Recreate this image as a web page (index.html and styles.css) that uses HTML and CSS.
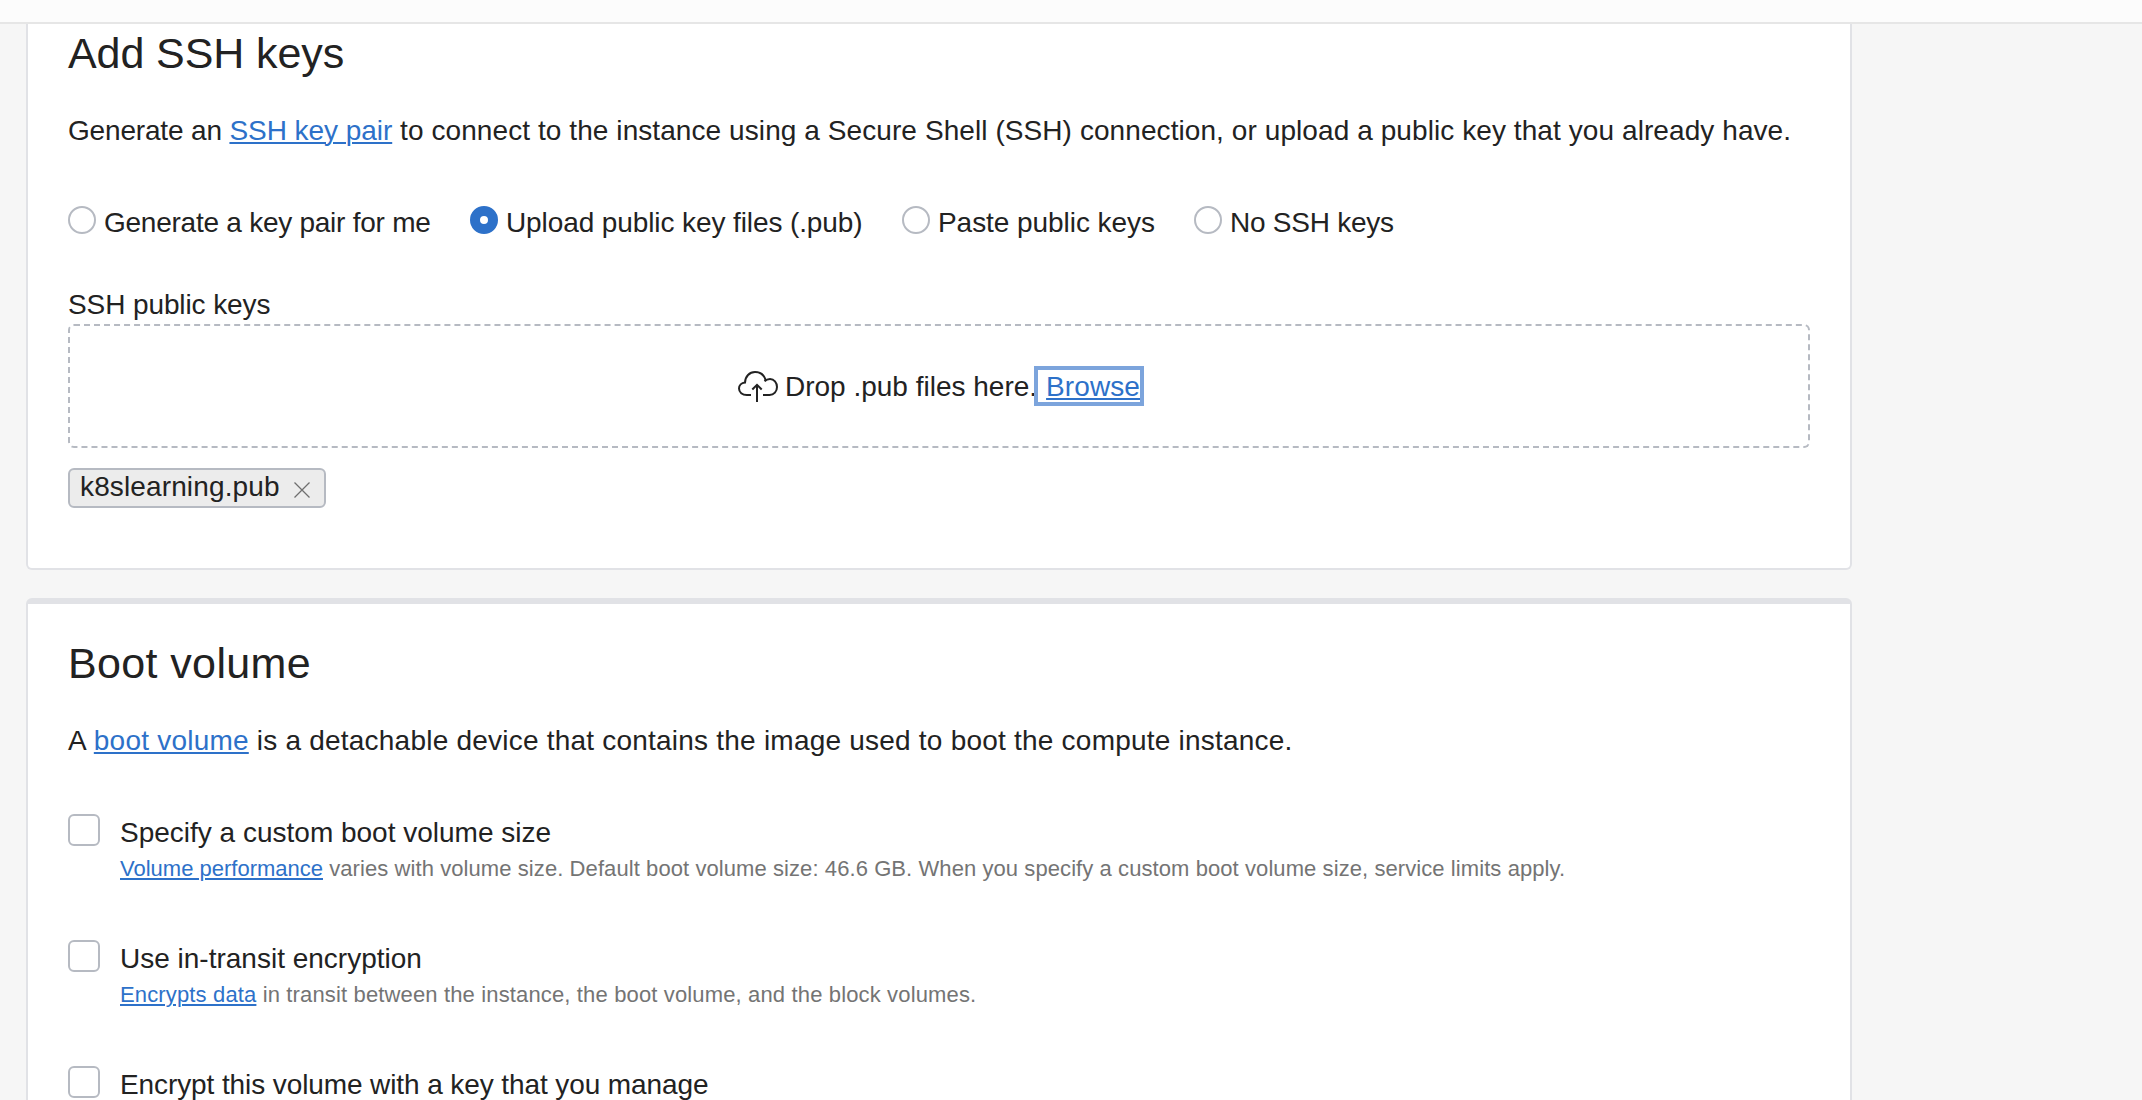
FILE: index.html
```html
<!DOCTYPE html>
<html lang="en">
<head>
<meta charset="utf-8">
<title>Create compute instance</title>
<link rel="stylesheet" href="styles.css">
</head>
<body>
<header class="topbar"></header>
<main class="content">
  <section class="card card-ssh">
    <h2 class="title title-ssh">Add SSH keys</h2>
    <p class="lead"><span class="ls-a">Generate an </span><a class="link ls-b" href="#">SSH key pair</a><span class="ls-c"> to connect to the instance using a Secure Shell (SSH) connection, or upload a public key that you already have.</span></p>
    <div class="radios">
      <label class="radio radio-generate"><span class="ring"></span><span>Generate a key pair for me</span></label>
      <label class="radio radio-upload"><span class="ring ring-on"></span><span>Upload public key files (.pub)</span></label>
      <label class="radio radio-paste"><span class="ring"></span><span>Paste public keys</span></label>
      <label class="radio radio-none"><span class="ring"></span><span>No SSH keys</span></label>
    </div>
    <div class="field-label">SSH public keys</div>
    <div class="dropzone">
      <svg class="cloud" width="40" height="33" viewBox="0 0 40 33" fill="none" stroke="#222" stroke-width="2">
        <path d="M13 25H8.8C4.300 25 1 22.200 1 18.600C1 15.400 3.500 13 7 12.600C7.200 6.400 11.500 2 17 2C22 2 26.300 5 27.700 10.600"/>
        <path d="M26.500 11.300C28 9.800 30 9 32 9C36 9 39 12.500 39 17C39 21.500 36 25 31.500 25H25"/>
        <path d="M19 32V15M14.300 19.500L19 14.800L23.700 19.500"/>
      </svg>
      <span class="drop-text">Drop .pub files here.</span>
      <a class="link browse" href="#">Browse</a>
    </div>
    <div class="chip">
      <span>k8slearning.pub</span>
      <svg class="chip-close" width="16" height="16" viewBox="0 0 16 16" stroke="#6f6f6f" stroke-width="1.300"><path d="M0.500 0.500L15.500 15.500M15.500 0.500L0.500 15.500"/></svg>
    </div>
  </section>

  <section class="card card-boot">
    <h2 class="title title-boot">Boot volume</h2>
    <p class="lead"><span class="ls-d">A </span><a class="link ls-e" href="#">boot volume</a><span class="ls-e"> is a detachable device that contains the image used to boot the compute instance.</span></p>
    <div class="options">
      <div class="option">
        <span class="box"></span>
        <div>
          <div class="option-name">Specify a custom boot volume size</div>
          <div class="hint"><a class="link" href="#">Volume performance</a><span class="ls-c"> varies with volume size. Default boot volume size: 46.6 GB. When you specify a custom boot volume size, service limits apply.</span></div>
        </div>
      </div>
      <div class="option">
        <span class="box"></span>
        <div>
          <div class="option-name">Use in-transit encryption</div>
          <div class="hint ls-f"><a class="link" href="#">Encrypts data</a> in transit between the instance, the boot volume, and the block volumes.</div>
        </div>
      </div>
      <div class="option">
        <span class="box"></span>
        <div>
          <div class="option-name ls-g">Encrypt this volume with a key that you manage</div>
        </div>
      </div>
    </div>
  </section>
</main>
</body>
</html>
```
FILE: styles.css
```css
* {
  box-sizing: border-box;
}

html,
body {
  height: 100%;
  margin: 0;
}

body {
  overflow: hidden;
  background: #f6f6f6;
  color: #222;
  font: 28px/42px "Liberation Sans", Arial, sans-serif;
}

.topbar {
  height: 24px;
  background: #fcfcfc;
  border-bottom: 2px solid #e6e6e6;
}

.content {
  display: flex;
  flex-direction: column;
  gap: 28px;
  width: 1852px;
  padding-left: 26px;
}

.card {
  background: #fff;
  border: 2px solid #e1e2e6;
  border-radius: 6px;
  padding: 0 40px;
}

.card-ssh {
  height: 546px;
  border-top: 0;
  border-top-left-radius: 0;
  border-top-right-radius: 0;
  padding-top: 1px;
}

.card-boot {
  border-top-width: 6px;
  padding-top: 31px;
}

.title {
  margin: 0 0 29px;
  font-size: 43px;
  font-weight: 400;
  line-height: 56px;
}

.title-ssh { letter-spacing: -0.1px; }
.title-boot { letter-spacing: 0.37px; }

.lead {
  margin: 0;
  white-space: nowrap;
}

.link {
  color: #2d71c9;
  text-decoration: underline;
  text-decoration-thickness: 2px;
  text-underline-offset: 2px;
}

/* Tracking per text run */
.ls-a { letter-spacing: -0.17px; }
.ls-b { letter-spacing: -0.05px; }
.ls-c { letter-spacing: 0.08px; }
.ls-d { letter-spacing: 0.45px; }
.ls-e { letter-spacing: 0.22px; }
.ls-f { letter-spacing: 0.145px; }
.ls-g { letter-spacing: -0.1px; }

.radios {
  display: flex;
  gap: 40px;
  margin: 50px 0 40px;
  white-space: nowrap;
}

.radio {
  display: flex;
  gap: 8px;
}

.radio-generate { width: 362px; letter-spacing: -0.25px; }
.radio-upload { width: 392px; letter-spacing: -0.1px; }
.radio-paste { width: 252px; letter-spacing: -0.06px; }
.radio-none { letter-spacing: -0.25px; }

.ring {
  flex: none;
  width: 28px;
  height: 28px;
  margin-top: 4px;
  border: 2px solid #b6bac2;
  border-radius: 50%;
}

.ring-on {
  border: 10px solid #2d71c9;
}

.field-label {
  height: 40px;
  letter-spacing: -0.1px;
}

.dropzone {
  display: flex;
  align-items: center;
  justify-content: center;
  height: 124px;
  border: 2px dashed #b6bac2;
  border-radius: 6px;
}

.cloud {
  margin-right: 7px;
}

.drop-text {
  padding-top: 2px;
  margin-right: 1px;
  line-height: 40px;
}

.browse {
  padding: 1px 0 0 8px;
  line-height: 31px;
  letter-spacing: 0.1px;
  outline: 4px solid #7ca4dc;
}

.chip {
  display: flex;
  justify-content: space-between;
  width: 258px;
  height: 40px;
  margin-top: 20px;
  padding: 0 14px 0 10px;
  line-height: 34px;
  letter-spacing: 0.13px;
  background: #ececec;
  border: 2px solid #b6bac2;
  border-radius: 6px;
}

.chip-close {
  margin-top: 12px;
}

.options {
  display: grid;
  gap: 43px;
  margin-top: 50px;
}

.option {
  display: flex;
  gap: 20px;
  height: 83px;
  white-space: nowrap;
}

.box {
  flex: none;
  width: 32px;
  height: 32px;
  margin-top: 2px;
  border: 2px solid #b6bac2;
  border-radius: 6px;
}

.hint {
  font-size: 22px;
  line-height: 30px;
  color: #747474;
}
```
